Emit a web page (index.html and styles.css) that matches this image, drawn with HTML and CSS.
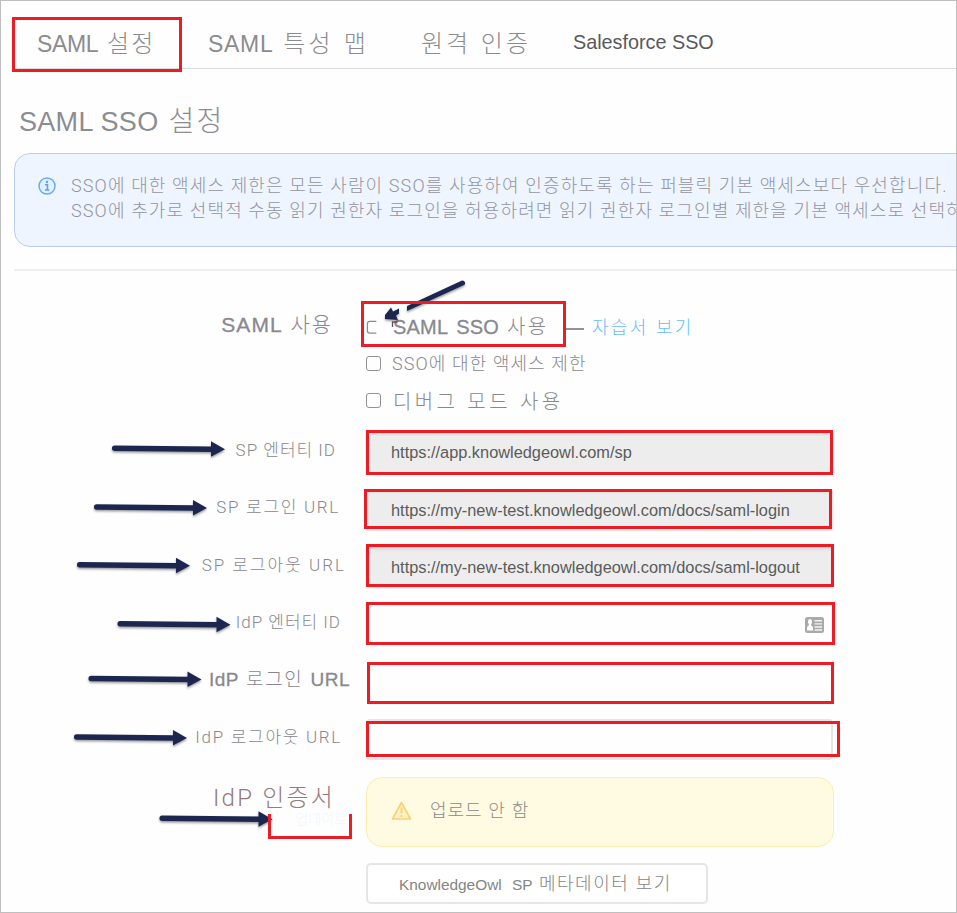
FILE: index.html
```html
<!DOCTYPE html>
<html lang="ko">
<head>
<meta charset="utf-8">
<title>SAML SSO 설정</title>
<link rel="stylesheet" href="styles.css">
</head>
<body>
<main class="page">
  <nav class="tabs">
    <span class="tab tab-settings"><i>SAML</i> 설정</span>
    <span class="tab tab-map"><i>SAML</i> 특성 맵</span>
    <span class="tab tab-remote">원격 인증</span>
    <span class="tab tab-salesforce">Salesforce SSO</span>
  </nav>
  <h1 class="title"><i>SAML SSO</i> 설정</h1>
  <section class="info">
    <svg class="info-icon" width="18" height="18" viewBox="0 0 18 18">
      <circle cx="9" cy="9" r="8" fill="#e2f0ff" stroke="#68abf9" stroke-width="1.5"/>
      <path d="M7 7.7h2.400v5M6.800 13h4.600" fill="none" stroke="#5ba3f8" stroke-width="1.600"/>
      <circle cx="9" cy="5" r="1.200" fill="#5ba3f8"/>
    </svg>
    <p class="info-text">SSO에 대한 액세스 제한은 모든 사람이 SSO를 사용하여 인증하도록 하는 퍼블릭 기본 액세스보다 우선합니다.<br>SSO에 추가로 선택적 수동 읽기 권한자 로그인을 허용하려면 읽기 권한자 로그인별 제한을 기본 액세스로 선택하</p>
  </section>
  <form class="form">
    <div class="row row-enable">
      <label class="label l-enable"><b>SAML</b> 사용</label>
      <div class="check">
        <svg class="box box-cut" width="16" height="16" viewBox="0 0 16 16"><path d="M11 1.500H4Q1.500 1.500 1.500 4v7.500q0 2.500 2.500 2.500h7" fill="none" stroke="#8b8b90" stroke-width="1.300"/></svg>
        <span class="c-enable"><b>SAML</b> <b>SSO</b> 사용</span>
        <span class="dash"></span>
        <span class="link">자습서 보기</span>
      </div>
    </div>
    <div class="row row-restrict">
      <span></span>
      <div class="check"><span class="box square"></span><span class="c-restrict">SSO에 대한 액세스 제한</span></div>
    </div>
    <div class="row row-debug">
      <span></span>
      <div class="check"><span class="box square"></span><span class="c-debug">디버그 모드 사용</span></div>
    </div>
    <div class="row field"><label class="label l-sp-id">SP 엔터티 ID</label><div class="input filled">https://app.knowledgeowl.com/sp</div></div>
    <div class="row field"><label class="label l-sp-in">SP 로그인 URL</label><div class="input filled">https://my-new-test.knowledgeowl.com/docs/saml-login</div></div>
    <div class="row field"><label class="label l-sp-out">SP 로그아웃 URL</label><div class="input filled">https://my-new-test.knowledgeowl.com/docs/saml-logout</div></div>
    <div class="row field"><label class="label l-idp-id">IdP 엔터티 ID</label>
      <div class="input with-icon">
        <svg width="19" height="16" viewBox="0 0 19 16">
          <rect width="19" height="16" rx="2.500" fill="#a9a9a9"/>
          <path d="M3 4.500Q3 2 5 2t2 2.500q0 2-1 3 0 1 1 1.500 1 .5 1 2v2.500H2V11q0-1.500 1-2t1-1.500q-1-1-1-3z" fill="#fff"/>
          <path d="M9.500 3.800H17M9.500 6.900H17M9.500 10H17M9.500 13H17" stroke="#f4f4f4" stroke-width="1.400"/>
        </svg>
      </div>
    </div>
    <div class="row field"><label class="label l-idp-in"><b>IdP</b> 로그인 <b>URL</b></label><div class="input"></div></div>
    <div class="row field"><label class="label l-idp-out">IdP 로그아웃 URL</label><div class="input edged"></div></div>
    <div class="row row-cert">
      <div class="cert"><label class="l-cert">IdP 인증서</label><span class="update">업데이트</span></div>
      <div class="warning">
        <svg width="21" height="20" viewBox="0 0 21 20">
          <path d="M10.500 1.500L19.500 18h-18z" fill="#fff3c4" stroke="#fad07a" stroke-width="1.700" stroke-linejoin="round"/>
          <path d="M10.500 6.500v6M10.500 14v2" stroke="#fad07a" stroke-width="1.900"/>
        </svg>
        <span class="w-text">업로드 안 함</span>
      </div>
    </div>
    <div class="row row-meta">
      <span></span>
      <div class="button"><span class="owl">KnowledgeOwl</span><span class="sp">SP</span><span class="meta">메타데이터 보기</span></div>
    </div>
  </form>
  <svg class="notes" width="957" height="913" viewBox="0 0 957 913">
    <defs>
      <g id="arrow">
        <path d="M2.700 0L100 1" stroke="#1d2850" stroke-width="5.500" stroke-linecap="round"/>
        <path d="M99-7L113 1 99 8.500z" fill="#1d2850"/>
      </g>
      <filter id="shade" x="-10%" y="-100%" width="120%" height="400%">
        <feDropShadow dx="0" dy="1.500" stdDeviation="1" flood-color="#000" flood-opacity=".4"/>
      </filter>
    </defs>
    <use href="#arrow" x="112" y="448.200" filter="url(#shade)"/>
    <use href="#arrow" x="94" y="507" filter="url(#shade)"/>
    <use href="#arrow" x="77" y="564.800" filter="url(#shade)"/>
    <use href="#arrow" x="117.500" y="623.700" filter="url(#shade)"/>
    <use href="#arrow" x="88.500" y="678.500" filter="url(#shade)"/>
    <use href="#arrow" x="74" y="737" filter="url(#shade)"/>
    <use href="#arrow" x="159.500" y="818.200" filter="url(#shade)"/>
    <g filter="url(#shade)">
      <path d="M461.500 280.700a2.500 2.500 0 0 1 2 4.600L407 311v-5z" fill="#1d2850"/>
      <path d="M385 319v-4l6-7.500 2 4 6-3v5l-3 2 2 4.500z" fill="#1d2850"/>
    </g>
    <path d="M392.500 327v-5h5" fill="none" stroke="#665054" stroke-width="1.300"/>
    <g fill="none" stroke="#ed1c24" stroke-width="3">
      <rect x="13.500" y="18.500" width="167" height="52"/>
      <rect x="362.500" y="302.500" width="202" height="43"/>
      <rect x="367.500" y="431.500" width="464" height="42"/>
      <rect x="365.500" y="490.500" width="465" height="37"/>
      <rect x="367.500" y="545.500" width="465" height="40"/>
      <rect x="367.500" y="603.500" width="466" height="40"/>
      <rect x="368.500" y="663.500" width="464" height="39"/>
      <rect x="367.500" y="722.500" width="471" height="33"/>
      <path d="M269.500 814v23.500h81V814"/>
    </g>
  </svg>
</main>
</body>
</html>
```
FILE: styles.css
```css
* { box-sizing: border-box; }

body {
  margin: 0;
  background: #fff;
  font-family: "Liberation Sans", "Noto Sans CJK KR", sans-serif;
  font-weight: 300;
  color: #88888e;
}

b { font-weight: 400; letter-spacing: 0; -webkit-text-stroke: .3px currentColor; }
i { font-style: normal; letter-spacing: 0; }

.page {
  position: relative;
  width: 957px;
  height: 913px;
  overflow: hidden;
  border: 1px solid #bfbfbf;
  background: #fefefe;
}

.tabs {
  display: flex;
  align-items: flex-start;
  height: 68px;
  margin-left: 12px;
  border-bottom: 1px solid #dcdcdc;
  font-size: 23px;
  line-height: 30px;
  white-space: nowrap;
  color: #8c8c8f;
}
.tab { padding-top: 28px; }
.tab-settings { width: 171px; padding-left: 24px; font-size: 24px; letter-spacing: 2.200px; }
.tab-settings i { font-size: 23px; letter-spacing: -.4px; }
.tab-map { width: 213px; padding-left: 24px; font-size: 24px; letter-spacing: 3.200px; }
.tab-map i { font-size: 23px; letter-spacing: .7px; }
.tab-remote { width: 153px; padding-left: 24px; font-size: 24px; letter-spacing: 3px; }
.tab-salesforce { width: 190px; padding-top: 26px; padding-left: 23px; font-size: 19.800px; color: #58595b; }

.title {
  margin: 36px 0 0 18px;
  font-size: 28px;
  font-weight: 300;
  line-height: 34px;
  letter-spacing: 2.300px;
  color: #8c8c92;
}
.title i { font-size: 27px; letter-spacing: .3px; }

.info {
  display: flex;
  gap: 15px;
  width: 970px;
  height: 94px;
  margin: 14px 0 0 13px;
  padding: 19px 23px;
  border: 1px solid #bccbf2;
  border-radius: 16px;
  background: #eef5ff;
}
.info-icon { flex: none; margin-top: 4px; }
.info-text {
  margin: 0;
  font-family: Roboto, "Noto Sans CJK KR", sans-serif;
  font-size: 18px;
  line-height: 25px;
  letter-spacing: 1.135px;
  white-space: nowrap;
  color: #9394a0;
}

.form {
  margin: 22px 0 0 13px;
  padding-top: 31px;
  border-top: 2px solid #eee;
}
.row {
  display: grid;
  grid-template-columns: 352px 1fr;
  align-items: center;
  white-space: nowrap;
}
.row-enable { height: 46px; }
.row-restrict { height: 31px; }
.row-debug { height: 44px; padding-bottom: 2px; }
.field { height: 57.500px; }

.label {
  justify-self: end;
  padding-bottom: 4px;
  font-family: Roboto, "Noto Sans CJK KR", sans-serif;
  font-size: 17px;
  line-height: 24px;
}
.l-enable { margin-right: 33px; padding: 0; font-family: inherit; font-size: 21px; letter-spacing: 1.900px; }
.l-enable b { letter-spacing: 1.100px; }
.l-sp-id { margin-right: 30px; letter-spacing: 1px; }
.l-sp-in { margin-right: 26px; letter-spacing: 1.700px; }
.l-sp-out { margin-right: 20px; letter-spacing: 2px; }
.l-idp-id { margin-right: 25px; letter-spacing: 1px; }
.l-idp-in { margin-right: 16px; font-family: inherit; font-size: 19px; letter-spacing: 1.700px; }
.l-idp-in b { letter-spacing: .5px; }
.l-idp-out { margin-right: 24px; letter-spacing: 1.700px; }

.check { display: flex; align-items: center; }
.box { flex: none; width: 15px; height: 15px; margin-right: 11px; }
.box-cut { margin-top: 4px; }
.square { border: 1.500px solid #929296; border-radius: 3px; }
.c-enable { width: 174px; margin-top: 1px; padding-left: 1px; font-size: 20px; letter-spacing: 2.400px; }
.c-enable b { letter-spacing: .2px; }
.c-restrict { margin-top: -3px; font-family: Roboto, "Noto Sans CJK KR", sans-serif; font-size: 18px; letter-spacing: 1.100px; }
.c-debug { padding-left: 1px; font-size: 20px; letter-spacing: 3.400px; }
.dash { width: 18px; height: 2px; margin: 8px 8px 0 0; background: #92929b; }
.link { margin-top: 1px; font-size: 18px; letter-spacing: 2.300px; color: #68bdfb; }

.input {
  display: flex;
  align-items: center;
  width: 467px;
  height: 41px;
  padding: 2px 24px 0 25px;
  border-radius: 4px;
  font-size: 16.350px;
  color: #5b5b5b;
}
.filled { background: #ededed; box-shadow: inset 0 4px 3px -1px #d2d2d2, 0 1px 2px #ddd; }
.with-icon { justify-content: flex-end; padding: 2px 9px 0 0; }
.edged { border: 2px solid #e3e5e8; }

.row-cert { height: 70px; margin-top: 9px; }
.cert {
  display: grid;
  grid-template-rows: 33px 20px;
  justify-items: end;
  height: 70px;
}
.l-cert {
  margin: 6px 31px 0 0;
  font-family: Roboto, "Noto Sans CJK KR", sans-serif;
  font-size: 24px;
  line-height: 30px;
  letter-spacing: 2.200px;
  color: #98787f;
}
.update { margin-right: 19px; font-size: 14px; line-height: 18px; color: #f2f6fd; }
.warning {
  display: flex;
  align-items: center;
  gap: 18px;
  width: 468px;
  height: 70px;
  padding: 0 24px 3px;
  border: 1px solid #fcedb0;
  border-radius: 16px;
  background: #fffae2;
}
.w-text { margin-top: -4px; font-size: 18px; letter-spacing: .9px; color: #8a8a8a; }

.row-meta { height: 41px; margin-top: 16px; }
.button {
  display: flex;
  align-items: baseline;
  width: 342px;
  height: 41px;
  padding: 4px 0 0 31px;
  border: 2px solid #e6e6e6;
  border-radius: 5px;
  background: #fff;
  color: #848484;
}
.owl { width: 113px; font-size: 15.400px; }
.sp { width: 27px; font-size: 15.400px; }
.meta { font-size: 18px; letter-spacing: 1.500px; }

.notes { position: absolute; top: -1px; left: -1px; }
```
